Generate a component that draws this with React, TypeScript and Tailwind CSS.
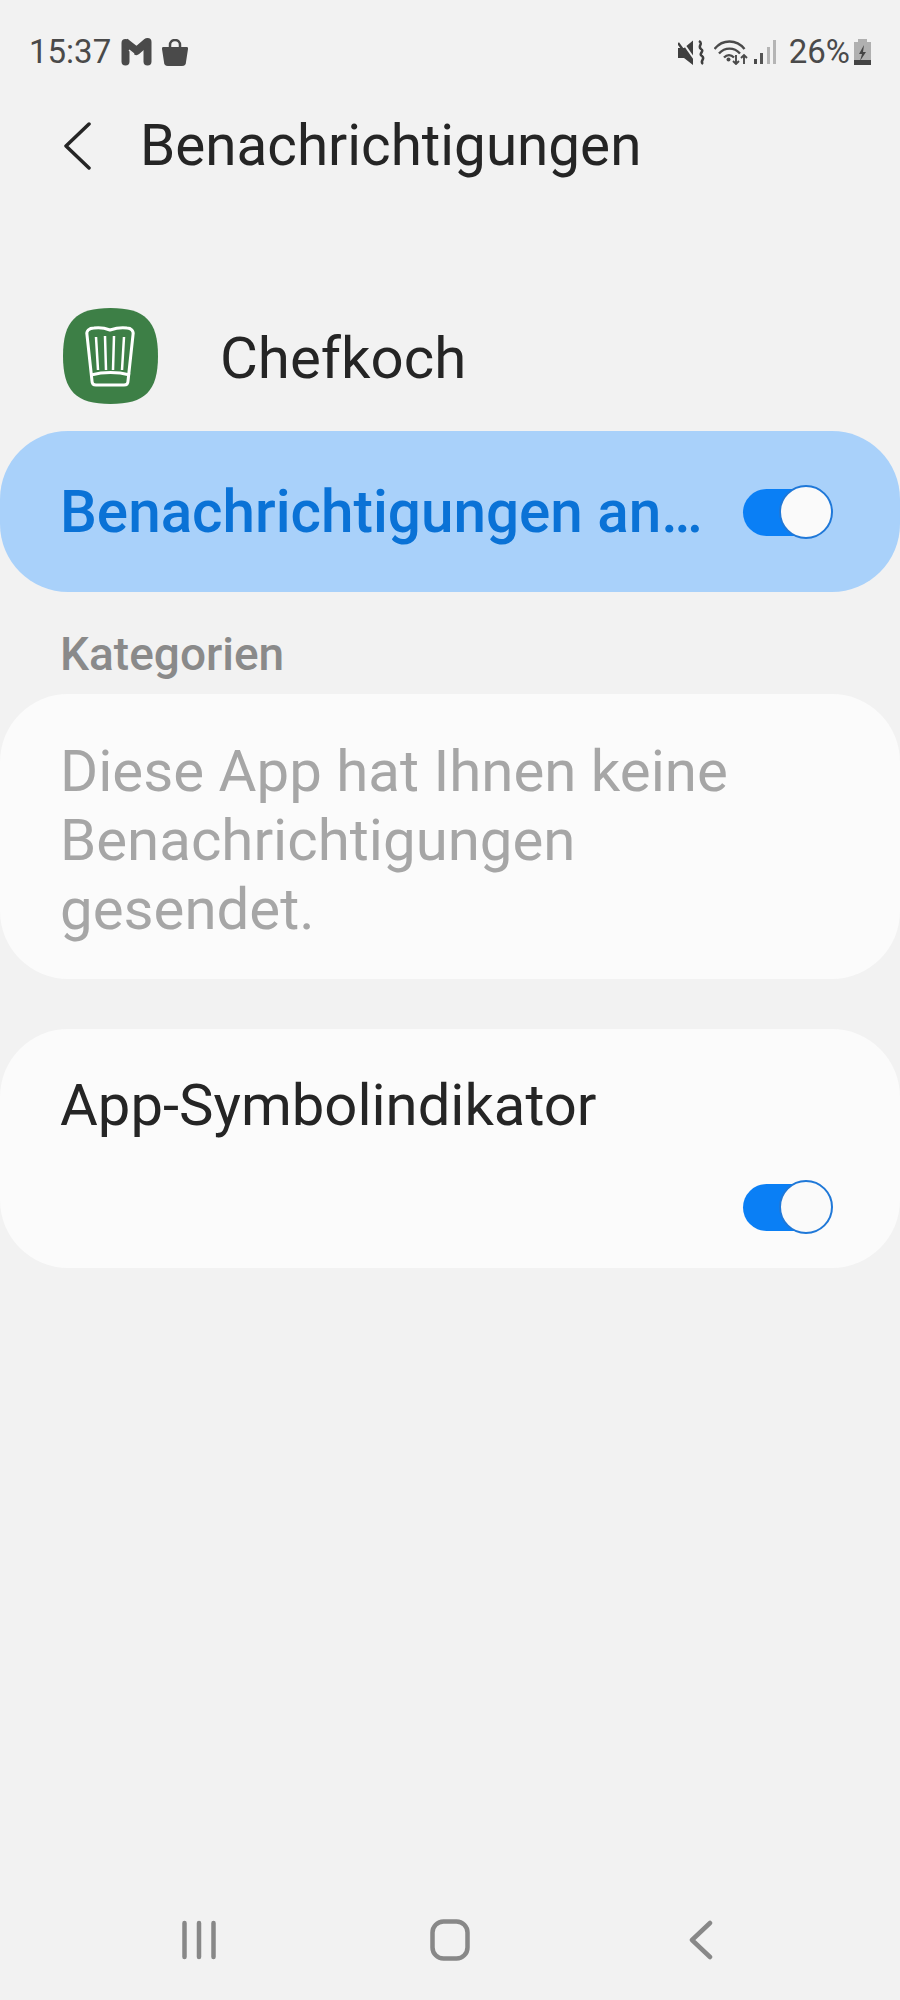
import React from 'react';

const Toggle: React.FC = () => (
  <div className="relative w-[90px] h-[54px] shrink-0">
    <div className="absolute left-0 top-[4px] w-[86px] h-[47px] rounded-full bg-[#0a7ff5]" />
    <div className="absolute right-0 top-0 w-[54px] h-[54px] rounded-full bg-[#fafafa] border-2 border-[#1f78d8]" />
  </div>
);

const GmailIcon = () => (
  <svg width="31" height="28" viewBox="0 0 31 28">
    <path d="M4.500 5v18.500M26.500 4v19.500" stroke="#4a4a4a" strokeWidth="8" strokeLinecap="round" fill="none" />
    <path d="M4 4l11.500 9L26 4" stroke="#4a4a4a" strokeWidth="8" strokeLinejoin="round" fill="none" />
    <path d="M8 12l5 4" stroke="#f2f2f2" strokeWidth="1.500" />
  </svg>
);

const BagIcon = () => (
  <svg width="26" height="27" viewBox="0 0 26 27">
    <path d="M8 8V6a5 5 0 0 1 10 0v2" stroke="#4a4a4a" strokeWidth="2.500" fill="none" />
    <path d="M1 8h24c1 0 1 1 1 2l-2 13a4 4 0 0 1-4 4H6a4 4 0 0 1-4-4L0 10c0-1 0-2 1-2z" fill="#4a4a4a" />
  </svg>
);

const MuteIcon = () => (
  <svg width="27" height="25" viewBox="0 0 27 25">
    <path d="M0 8h6l9-7.500V25l-9-7H0z" fill="#3f3f3f" />
    <path d="M3 0l14 20" stroke="#f2f2f2" strokeWidth="2" />
    <path d="M0 3l14 19" stroke="#3f3f3f" strokeWidth="2.500" />
    <path d="M21 1c5 3-2 5 2 8 4 2-3 5 1 7 4 3-3 5 1 8" stroke="#3f3f3f" strokeWidth="2.500" fill="none" />
  </svg>
);

const WifiIcon = () => (
  <svg width="34" height="25" viewBox="0 0 34 25">
    <path d="M0.500 9c8-10 22-10 30 0" stroke="#4a4a4a" strokeWidth="2.400" fill="none" />
    <path d="M5 13.500c6-6.500 15-6.500 21 0" stroke="#4a4a4a" strokeWidth="2.400" fill="none" />
    <path d="M10 17.500c3-3 7-3 10 0" stroke="#4a4a4a" strokeWidth="2.400" fill="none" />
    <circle cx="14.500" cy="19.500" r="2" fill="#4a4a4a" />
    <path d="M22 15v9M19 21l3 3 3-3" stroke="#4a4a4a" strokeWidth="1.900" fill="none" />
    <path d="M30 24v-9M27 18l3-3 3 3" stroke="#4a4a4a" strokeWidth="1.900" fill="none" />
  </svg>
);

const SignalIcon = () => (
  <svg width="22" height="25" viewBox="0 0 22 25">
    <rect x="0" y="19" width="3" height="5" fill="#4a4a4a" />
    <rect x="6" y="13" width="3" height="11" fill="#555555" />
    <rect x="13" y="7" width="3" height="17" fill="#b5b5b5" />
    <rect x="19" y="0" width="3" height="24" fill="#b5b5b5" />
  </svg>
);

const BatteryIcon = () => (
  <svg width="17" height="26" viewBox="0 0 17 26">
    <rect x="4" y="0" width="9" height="3" fill="#b0b0b0" />
    <rect x="0" y="3" width="17" height="18" fill="#b0b0b0" />
    <rect x="0" y="21" width="17" height="5" fill="#444444" />
    <path d="M10 6l-5 9h3l-2 7 6-9H9z" fill="#444444" />
  </svg>
);

const ChefHat = () => (
  <svg width="95" height="96" viewBox="0 0 95 96">
    <path
      d="M0 48C0 13 13 0 47.500 0S95 13 95 48 82 96 47.500 96 0 83 0 48z"
      fill="#3d7f46"
    />
    <path
      d="M24 27c-1-4 2-7 7-7 6-1 11 0 16 2 6-2 11-3 17-2 4 0 7 3 6 7l-5 46c0 3-2 4-4 4H33c-2 0-4-1-4-4z"
      fill="none"
      stroke="#ffffff"
      strokeWidth="3"
      strokeLinejoin="round"
    />
    <path d="M33 29l2 33M42 28l1 34M51 28l-1 34M61 29l-2 33" stroke="#ffffff" strokeWidth="2.500" fill="none" />
    <path d="M28 67c12-3 27-3 39 0" stroke="#ffffff" strokeWidth="3" fill="none" />
  </svg>
);

const App: React.FC = () => {
  return (
    <div className="w-[900px] h-[2000px] bg-[#f2f2f2] flex flex-col font-['Roboto',sans-serif]">
      <div className="h-[104px] flex items-center justify-between pl-[29px] pr-[29px]">
        <div className="flex items-center text-[33px] text-[#4a4a4a]">
          <span>15:37</span>
          <span className="w-[10px]" />
          <GmailIcon />
          <span className="w-[10px]" />
          <BagIcon />
        </div>
        <div className="flex items-center text-[33px] text-[#4a4a4a]">
          <MuteIcon />
          <span className="w-[9px]" />
          <WifiIcon />
          <span className="w-[6px]" />
          <SignalIcon />
          <span className="w-[13px]" />
          <span>26%</span>
          <span className="w-[4px]" />
          <BatteryIcon />
        </div>
      </div>

      <div className="h-[84px] flex items-center pl-[62px]">
        <svg width="30" height="48" viewBox="0 0 30 48" className="shrink-0">
          <path d="M27 2L4 24l23 22" stroke="#252525" strokeWidth="3.500" fill="none" strokeLinecap="round" strokeLinejoin="round" />
        </svg>
        <h1 className="ml-[48px] text-[56.600px] text-[#252525] font-normal">Benachrichtigungen</h1>
      </div>

      <div className="mt-[120px] h-[96px] flex items-center pl-[63px]">
        <ChefHat />
        <span className="ml-[62px] pt-[6px] text-[58.200px] text-[#252525]">Chefkoch</span>
      </div>

      <div className="mt-[27px] h-[161px] rounded-[68px] bg-[#a9d1fa] flex items-center pl-[60px] pr-[67px]">
        <span className="flex-1 pt-[2px] text-[58.400px] font-medium text-[#0a72d6] whitespace-nowrap">Benachrichtigungen an…</span>
        <Toggle />
      </div>

      <div className="mt-[37px] pl-[60px] h-[50px] flex items-center text-[46px] font-medium text-[#8a8a8a]">Kategorien</div>

      <div className="mt-[15px] h-[285px] rounded-[68px] bg-[#fbfbfb] pl-[60px] pr-[40px] pt-[43px] text-[58.200px] leading-[69px] text-[#a6a6a6]">
        Diese App hat Ihnen keine
        <br />
        Benachrichtigungen
        <br />
        gesendet.
      </div>

      <div className="mt-[50px] h-[239px] rounded-[68px] bg-[#fbfbfb] pl-[60px] pr-[67px] pt-[42px] flex flex-col">
        <span className="text-[58px] leading-[69px] text-[#252525]">App-Symbolindikator</span>
        <div className="mt-[40px] flex justify-end">
          <Toggle />
        </div>
      </div>

      <div className="mt-auto h-[120px] grid grid-cols-3 justify-items-center items-center pl-[74px] pr-[74px]">
        <svg width="36" height="40" viewBox="0 0 36 40">
          <path d="M3.500 3v34M18 3v34M32.500 3v34" stroke="#888888" strokeWidth="4.500" strokeLinecap="round" />
        </svg>
        <svg width="40" height="42" viewBox="0 0 40 42">
          <rect x="2.500" y="2.500" width="35" height="37" rx="11" fill="none" stroke="#888888" strokeWidth="4.500" />
        </svg>
        <svg width="24" height="40" viewBox="0 0 24 40">
          <path d="M21 3L3 20l18 17" stroke="#888888" strokeWidth="4.500" fill="none" strokeLinecap="round" strokeLinejoin="round" />
        </svg>
      </div>
    </div>
  );
};

export default App;
